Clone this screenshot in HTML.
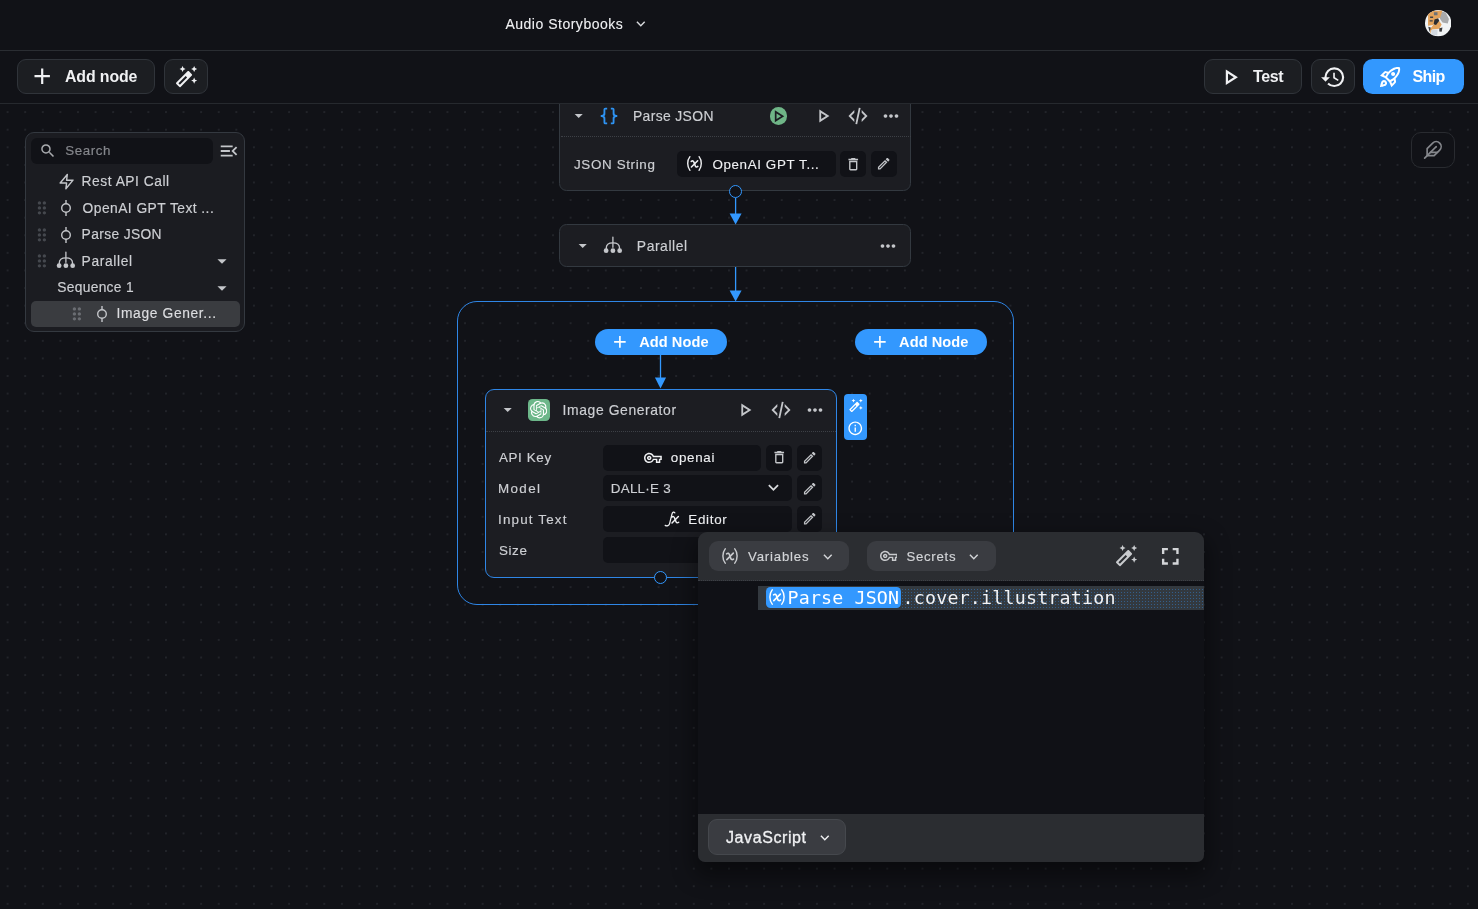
<!DOCTYPE html>
<html lang="en"><head><meta charset="utf-8"><title>Audio Storybooks</title><style>
*{margin:0;padding:0}
html,body{width:1478px;height:909px;overflow:hidden;background:#111217;}
body{position:relative;font-family:'Liberation Sans', sans-serif;}
#app{position:absolute;left:0;top:0;width:1478px;height:909px;will-change:transform;}
.b{position:absolute;box-sizing:border-box}
.ic{position:absolute;display:block}
.t{position:absolute;white-space:nowrap;line-height:20px;}
#canvas{background-image:radial-gradient(circle,#25272d 0.600px,rgba(37,39,45,0) 1.250px);background-size:17.600px 17.600px;background-position:-1.200px 0.300px;}
</style></head>
<body>
<div id="app">
<div class="b" id="canvas" style="left:0;top:103px;width:1478px;height:806px;"></div>
<div class="b " style="left:559.4px;top:90px;width:352.0px;height:101.19999999999999px;background:#1c1d22;border:1px solid #333940;border-radius:7.5px;"></div>
<div class="b " style="left:561px;top:136px;width:349.5px;height:1px;border-top:1px dotted #3d4046;"></div>
<svg class="ic" style="left:569.3px;top:106.0px;width:19.4px;height:19.4px;color:#c4c6ca;" viewBox="0 0 24 24" fill="currentColor"><path d="M7 10l5 5 5-5z"/></svg>
<svg class="ic" style="left:598.1px;top:104.9px;width:22px;height:22px;color:#2e93f3;" viewBox="0 0 24 24" fill="currentColor"><path d="M8 3a2 2 0 0 0-2 2v4a2 2 0 0 1-2 2H3v2h1a2 2 0 0 1 2 2v4a2 2 0 0 0 2 2h2v-2H8v-5a2 2 0 0 0-2-2 2 2 0 0 0 2-2V5h2V3m6 0a2 2 0 0 1 2 2v4a2 2 0 0 0 2 2h1v2h-1a2 2 0 0 0-2 2v4a2 2 0 0 1-2 2h-2v-2h2v-5a2 2 0 0 1 2-2 2 2 0 0 1-2-2V5h-2V3h2z"/></svg>
<span class="t" style="left:633.00px;top:106.00px;font-size:13.9px;letter-spacing:0.360px;color:#cdcfd3;-webkit-text-stroke:0.16px #cdcfd3;">Parse JSON</span>
<div class="b" style="left:769.600px;top:107.100px;width:17.800px;height:17.800px;border-radius:50%;background:#6fb587;"></div>
<svg class="ic" style="left:767.9px;top:105.8px;width:20.5px;height:20.5px;color:#1c1d22;" viewBox="0 0 24 24" fill="currentColor"><path d="M10 8.64L15.27 12 10 15.36V8.64M8 5v14l11-7L8 5z"/></svg>
<svg class="ic" style="left:812.0px;top:105.1px;width:22px;height:22px;color:#c4c6ca;" viewBox="0 0 24 24" fill="currentColor"><path d="M10 8.64L15.27 12 10 15.36V8.64M8 5v14l11-7L8 5z"/></svg>
<svg class="ic" style="left:846.9px;top:105.0px;width:22px;height:22px;color:#c4c6ca;" viewBox="0 0 24 24" fill="currentColor"><path d="M12.89 3l1.96.4L11.11 21l-1.96-.4L12.89 3m6.7 9L16 8.41V5.58L22.42 12 16 18.41v-2.83L19.59 12M1.58 12L8 5.58v2.83L4.41 12 8 15.58v2.83L1.58 12z"/></svg>
<svg class="ic" style="left:879.9px;top:105.0px;width:22px;height:22px;color:#c4c6ca;" viewBox="0 0 24 24" fill="currentColor"><path d="M6 10c-1.1 0-2 .9-2 2s.9 2 2 2 2-.9 2-2-.9-2-2-2zm12 0c-1.1 0-2 .9-2 2s.9 2 2 2 2-.9 2-2-.9-2-2-2zm-6 0c-1.1 0-2 .9-2 2s.9 2 2 2 2-.9 2-2-.9-2-2-2z"/></svg>
<span class="t" style="left:574.00px;top:154.50px;font-size:13.4px;letter-spacing:0.643px;color:#cdcfd3;-webkit-text-stroke:0.16px #cdcfd3;">JSON String</span>
<div class="b " style="left:677.4px;top:150.8px;width:158.39999999999998px;height:26.0px;background:#111217;border-radius:5px;"></div>
<svg class="ic" style="left:684.2px;top:153.3px;width:21px;height:21px;color:#f0f1f3;" viewBox="0 0 24 24" fill="currentColor"><g fill="none" stroke="currentColor" stroke-width="1.600" stroke-linecap="round"><path d="M6.800 4.200C3.400 8.400 3.400 15.600 6.800 19.800"/><path d="M17.200 4.200C20.600 8.400 20.600 15.600 17.200 19.800"/><path d="M8.300 9.600C9.800 8.400 10.800 9 11.400 10.700L12.700 14.300C13.300 16 14.400 16.500 15.800 15.300" stroke-width="1.800"/><path d="M15.600 8.900L8.500 16" stroke-width="1.800"/></g></svg>
<span class="t" style="left:712.40px;top:154.50px;font-size:13.4px;letter-spacing:0.621px;color:#f0f1f3;-webkit-text-stroke:0.1px #f0f1f3;">OpenAI GPT T...</span>
<div class="b " style="left:840.4px;top:150.8px;width:25.600000000000023px;height:26.0px;background:#111217;border-radius:5px;"></div>
<svg class="ic" style="left:845.0px;top:155.6px;width:16.5px;height:16.5px;color:#c4c6ca;" viewBox="0 0 24 24" fill="currentColor"><path d="M6 19c0 1.1.9 2 2 2h8c1.1 0 2-.9 2-2V7H6v12zM8 9h8v10H8V9zm7.5-5l-1-1h-5l-1 1H5v2h14V4z"/></svg>
<div class="b " style="left:871px;top:150.8px;width:26.200000000000045px;height:26.0px;background:#111217;border-radius:5px;"></div>
<svg class="ic" style="left:876.4px;top:156.1px;width:15.4px;height:15.4px;color:#c4c6ca;" viewBox="0 0 24 24" fill="currentColor"><path d="M14.06 9.02l.92.92L5.92 19H5v-.92l9.06-9.06M17.66 3c-.25 0-.51.1-.7.29l-1.83 1.83 3.75 3.75 1.83-1.83a.996.996 0 0 0 0-1.41l-2.34-2.34c-.2-.2-.45-.29-.71-.29zm-3.6 3.19L3 17.25V21h3.75L17.81 9.94l-3.75-3.75z"/></svg>
<div class="b " style="left:559.4px;top:224.4px;width:352.0px;height:42.79999999999998px;background:#1c1d22;border:1px solid #333940;border-radius:7.5px;"></div>
<svg class="ic" style="left:572.6px;top:235.9px;width:19.4px;height:19.4px;color:#c4c6ca;" viewBox="0 0 24 24" fill="currentColor"><path d="M7 10l5 5 5-5z"/></svg>
<svg class="ic" style="left:603.0px;top:234.7px;width:19.8px;height:19.8px;color:#c4c6ca;" viewBox="0 0 24 24" fill="currentColor"><g fill="none" stroke="currentColor" stroke-width="1.600" stroke-linecap="round"><path d="M12 2.500V15"/><path d="M4 17V15.500C4 11.500 7.500 9.500 12 9.500S20 11.500 20 15.500V17"/></g><circle cx="3.800" cy="19" r="2.900"/><circle cx="12" cy="19" r="2.900"/><circle cx="20.200" cy="19" r="2.900"/></svg>
<span class="t" style="left:636.80px;top:236.00px;font-size:13.9px;letter-spacing:0.566px;color:#cdcfd3;-webkit-text-stroke:0.16px #cdcfd3;">Parallel</span>
<svg class="ic" style="left:877.3px;top:235.0px;width:22px;height:22px;color:#c4c6ca;" viewBox="0 0 24 24" fill="currentColor"><path d="M6 10c-1.1 0-2 .9-2 2s.9 2 2 2 2-.9 2-2-.9-2-2-2zm12 0c-1.1 0-2 .9-2 2s.9 2 2 2 2-.9 2-2-.9-2-2-2zm-6 0c-1.1 0-2 .9-2 2s.9 2 2 2 2-.9 2-2-.9-2-2-2z"/></svg>
<div class="b " style="left:457.2px;top:300.9px;width:556.8px;height:304.1px;border:1.3px solid #2f86e6;border-radius:20px;"></div>
<div class="b " style="left:594.8px;top:329px;width:132.0px;height:26px;background:#3398fe;border-radius:13px;"></div>
<svg class="ic" style="left:610.3px;top:332.1px;width:19.8px;height:19.8px;color:#fff;" viewBox="0 0 24 24" fill="currentColor"><path d="M19 13h-6v6h-2v-6H5v-2h6V5h2v6h6v2z"/></svg>
<span class="t" style="left:639.20px;top:332.00px;font-size:14.6px;letter-spacing:0.058px;color:#fff;font-weight:700;">Add Node</span>
<div class="b " style="left:854.7px;top:329px;width:132.0px;height:26px;background:#3398fe;border-radius:13px;"></div>
<svg class="ic" style="left:870.2px;top:332.1px;width:19.8px;height:19.8px;color:#fff;" viewBox="0 0 24 24" fill="currentColor"><path d="M19 13h-6v6h-2v-6H5v-2h6V5h2v6h6v2z"/></svg>
<span class="t" style="left:899.10px;top:332.00px;font-size:14.6px;letter-spacing:0.058px;color:#fff;font-weight:700;">Add Node</span>
<svg class="b" style="left:0;top:0;width:1478px;height:909px;overflow:visible" viewBox="0 0 1478 909">
<g stroke="#3398fe" stroke-width="1.3" fill="none">
<path d="M735.6 198V215"/><path d="M735.6 267V292"/><path d="M660.5 355V379"/>
</g>
<g fill="#3398fe"><path d="M729.6 213.400h12l-6 11z"/><path d="M729.6 290.400h12l-6 11z"/><path d="M654.9 377.400h11.200l-5.600 11z"/></g>
</svg>
<div class="b " style="left:485px;top:388.5px;width:352.20000000000005px;height:189.10000000000002px;background:#1c1d22;border:1.2px solid #2f86e6;border-radius:9px;"></div>
<div class="b " style="left:486px;top:430.5px;width:350px;height:1.0px;border-top:1px dotted #3d4046;"></div>
<svg class="ic" style="left:497.5px;top:400.3px;width:19.4px;height:19.4px;color:#c4c6ca;" viewBox="0 0 24 24" fill="currentColor"><path d="M7 10l5 5 5-5z"/></svg>
<div class="b" style="left:527.600px;top:398.900px;width:22.100px;height:22.100px;border-radius:4.500px;background:#6db78a;"></div>
<svg class="ic" style="left:530px;top:401.300px;width:17.400px;height:17.400px" viewBox="0 0 24 24" fill="#fff"><path d="M22.2819 9.8211a5.9847 5.9847 0 0 0-.5157-4.9108 6.0462 6.0462 0 0 0-6.5098-2.9A6.0651 6.0651 0 0 0 4.9807 4.1818a5.9847 5.9847 0 0 0-3.9977 2.9 6.0462 6.0462 0 0 0 .7427 7.0966 5.98 5.98 0 0 0 .511 4.9107 6.051 6.051 0 0 0 6.5146 2.9001A5.9847 5.9847 0 0 0 13.2599 24a6.0557 6.0557 0 0 0 5.7718-4.2058 5.9894 5.9894 0 0 0 3.9977-2.9001 6.0557 6.0557 0 0 0-.7475-7.0729zm-9.022 12.6081a4.4755 4.4755 0 0 1-2.8764-1.0408l.1419-.0804 4.7783-2.7582a.7948.7948 0 0 0 .3927-.6813v-6.7369l2.02 1.1686a.071.071 0 0 1 .038.052v5.5826a4.504 4.504 0 0 1-4.4945 4.4944zm-9.6607-4.1254a4.4708 4.4708 0 0 1-.5346-3.0137l.142.0852 4.783 2.7582a.7712.7712 0 0 0 .7806 0l5.8428-3.3685v2.3324a.0804.0804 0 0 1-.0332.0615L9.74 19.9502a4.4992 4.4992 0 0 1-6.1408-1.6464zM2.3408 7.8956a4.485 4.485 0 0 1 2.3655-1.9728V11.6a.7664.7664 0 0 0 .3879.6765l5.8144 3.3543-2.0201 1.1685a.0757.0757 0 0 1-.071 0l-4.8303-2.7865A4.504 4.504 0 0 1 2.3408 7.872zm16.5963 3.8558L13.1038 8.364 15.1192 7.2a.0757.0757 0 0 1 .071 0l4.8303 2.7913a4.4944 4.4944 0 0 1-.6765 8.1042v-5.6772a.79.79 0 0 0-.407-.667zm2.0107-3.0231l-.142-.0852-4.7735-2.7818a.7759.7759 0 0 0-.7854 0L9.409 9.2297V6.8974a.0662.0662 0 0 1 .0284-.0615l4.8303-2.7866a4.4992 4.4992 0 0 1 6.6802 4.66zM8.3065 12.863l-2.02-1.1638a.0804.0804 0 0 1-.038-.0567V6.0742a4.4992 4.4992 0 0 1 7.3757-3.4537l-.142.0805L8.704 5.459a.7948.7948 0 0 0-.3927.6813zm1.0976-2.3654l2.602-1.4998 2.6069 1.4998v2.9994l-2.5974 1.4997-2.6067-1.4997Z"/></svg>
<span class="t" style="left:562.60px;top:400.00px;font-size:13.9px;letter-spacing:0.601px;color:#cdcfd3;-webkit-text-stroke:0.16px #cdcfd3;">Image Generator</span>
<svg class="ic" style="left:734.3px;top:399.0px;width:22px;height:22px;color:#c4c6ca;" viewBox="0 0 24 24" fill="currentColor"><path d="M10 8.64L15.27 12 10 15.36V8.64M8 5v14l11-7L8 5z"/></svg>
<svg class="ic" style="left:770.0px;top:398.9px;width:22px;height:22px;color:#c4c6ca;" viewBox="0 0 24 24" fill="currentColor"><path d="M12.89 3l1.96.4L11.11 21l-1.96-.4L12.89 3m6.7 9L16 8.41V5.58L22.42 12 16 18.41v-2.83L19.59 12M1.58 12L8 5.58v2.83L4.41 12 8 15.58v2.83L1.58 12z"/></svg>
<svg class="ic" style="left:803.7px;top:399.0px;width:22px;height:22px;color:#c4c6ca;" viewBox="0 0 24 24" fill="currentColor"><path d="M6 10c-1.1 0-2 .9-2 2s.9 2 2 2 2-.9 2-2-.9-2-2-2zm12 0c-1.1 0-2 .9-2 2s.9 2 2 2 2-.9 2-2-.9-2-2-2zm-6 0c-1.1 0-2 .9-2 2s.9 2 2 2 2-.9 2-2-.9-2-2-2z"/></svg>
<span class="t" style="left:499.00px;top:448.00px;font-size:13.4px;letter-spacing:0.620px;color:#cdcfd3;-webkit-text-stroke:0.16px #cdcfd3;">API Key</span>
<span class="t" style="left:498.00px;top:479.00px;font-size:13.4px;letter-spacing:1.376px;color:#cdcfd3;-webkit-text-stroke:0.16px #cdcfd3;">Model</span>
<span class="t" style="left:498.00px;top:510.00px;font-size:13.4px;letter-spacing:1.184px;color:#cdcfd3;-webkit-text-stroke:0.16px #cdcfd3;">Input Text</span>
<span class="t" style="left:499.00px;top:541.00px;font-size:13.4px;letter-spacing:0.599px;color:#cdcfd3;-webkit-text-stroke:0.16px #cdcfd3;">Size</span>
<div class="b " style="left:602.5px;top:444.5px;width:158.39999999999998px;height:26.100000000000023px;background:#111217;border-radius:5px;"></div>
<svg class="ic" style="left:644.1px;top:448.7px;width:17.8px;height:17.8px;color:#f0f1f3;" viewBox="0 0 24 24" fill="currentColor"><path d="M22 19h-6v-4h-2.68c-1.14 2.42-3.6 4-6.32 4-3.86 0-7-3.14-7-7s3.14-7 7-7c2.72 0 5.17 1.58 6.32 4H24v6h-2v4zm-4-2h2v-4h2v-2H11.94l-.23-.67C11.01 8.34 9.11 7 7 7c-2.76 0-5 2.24-5 5s2.24 5 5 5c2.11 0 4.01-1.34 4.71-3.33l.23-.67H18v4zM7 15c-1.65 0-3-1.35-3-3s1.35-3 3-3 3 1.35 3 3-1.35 3-3 3zm0-4c-.55 0-1 .45-1 1s.45 1 1 1 1-.45 1-1-.45-1-1-1z"/></svg>
<span class="t" style="left:670.80px;top:447.90px;font-size:13.4px;letter-spacing:0.673px;color:#f0f1f3;-webkit-text-stroke:0.1px #f0f1f3;">openai</span>
<div class="b " style="left:765.7px;top:444.5px;width:26.09999999999991px;height:26.100000000000023px;background:#111217;border-radius:5px;"></div>
<svg class="ic" style="left:770.8px;top:449.1px;width:16.5px;height:16.5px;color:#c4c6ca;" viewBox="0 0 24 24" fill="currentColor"><path d="M6 19c0 1.1.9 2 2 2h8c1.1 0 2-.9 2-2V7H6v12zM8 9h8v10H8V9zm7.5-5l-1-1h-5l-1 1H5v2h14V4z"/></svg>
<div class="b " style="left:796.8px;top:444.5px;width:25.5px;height:26.100000000000023px;background:#111217;border-radius:5px;"></div>
<svg class="ic" style="left:801.9px;top:449.8px;width:15.4px;height:15.4px;color:#c4c6ca;" viewBox="0 0 24 24" fill="currentColor"><path d="M14.06 9.02l.92.92L5.92 19H5v-.92l9.06-9.06M17.66 3c-.25 0-.51.1-.7.29l-1.83 1.83 3.75 3.75 1.83-1.83a.996.996 0 0 0 0-1.41l-2.34-2.34c-.2-.2-.45-.29-.71-.29zm-3.6 3.19L3 17.25V21h3.75L17.81 9.94l-3.75-3.75z"/></svg>
<div class="b " style="left:602.5px;top:475.25px;width:189.29999999999995px;height:26.100000000000023px;background:#111217;border-radius:5px;"></div>
<span class="t" style="left:610.80px;top:478.70px;font-size:13.4px;letter-spacing:0.256px;color:#cdcfd3;-webkit-text-stroke:0.16px #cdcfd3;">DALL·E 3</span>
<svg class="ic" style="left:762.6px;top:477.4px;width:20.9px;height:20.9px;color:#d8dadd;" viewBox="0 0 24 24" fill="currentColor"><path d="M16.59 8.59L12 13.17 7.41 8.59 6 10l6 6 6-6z"/></svg>
<div class="b " style="left:796.8px;top:475.25px;width:25.5px;height:26.100000000000023px;background:#111217;border-radius:5px;"></div>
<svg class="ic" style="left:801.9px;top:480.6px;width:15.4px;height:15.4px;color:#c4c6ca;" viewBox="0 0 24 24" fill="currentColor"><path d="M14.06 9.02l.92.92L5.92 19H5v-.92l9.06-9.06M17.66 3c-.25 0-.51.1-.7.29l-1.83 1.83 3.75 3.75 1.83-1.83a.996.996 0 0 0 0-1.41l-2.34-2.34c-.2-.2-.45-.29-.71-.29zm-3.6 3.19L3 17.25V21h3.75L17.81 9.94l-3.75-3.75z"/></svg>
<div class="b " style="left:602.5px;top:506.0px;width:189.29999999999995px;height:26.100000000000023px;background:#111217;border-radius:5px;"></div>
<svg class="ic" style="left:663.2px;top:510.1px;width:17.6px;height:17.6px;color:#f0f1f3;" viewBox="0 0 24 24" fill="currentColor"><g fill="none" stroke="currentColor" stroke-width="1.700" stroke-linecap="round" stroke-linejoin="round"><path d="M16.200 3.800C15 2.400 13 2.600 12.300 5.400L9 18.600C8.300 21.400 5.500 22.300 3 21"/><path d="M12 9.700C13.800 8.300 15 9 15.800 11L17.600 15.600C18.400 17.600 19.800 18.200 21.400 16.800" stroke-width="2"/><path d="M21 8.800L12.300 17.800" stroke-width="2"/></g></svg>
<span class="t" style="left:688.30px;top:509.70px;font-size:13.4px;letter-spacing:0.696px;color:#f0f1f3;-webkit-text-stroke:0.1px #f0f1f3;">Editor</span>
<div class="b " style="left:796.8px;top:506.0px;width:25.5px;height:26.100000000000023px;background:#111217;border-radius:5px;"></div>
<svg class="ic" style="left:801.9px;top:511.3px;width:15.4px;height:15.4px;color:#c4c6ca;" viewBox="0 0 24 24" fill="currentColor"><path d="M14.06 9.02l.92.92L5.92 19H5v-.92l9.06-9.06M17.66 3c-.25 0-.51.1-.7.29l-1.83 1.83 3.75 3.75 1.83-1.83a.996.996 0 0 0 0-1.41l-2.34-2.34c-.2-.2-.45-.29-.71-.29zm-3.6 3.19L3 17.25V21h3.75L17.81 9.94l-3.75-3.75z"/></svg>
<div class="b " style="left:602.5px;top:536.75px;width:189.29999999999995px;height:26.100000000000023px;background:#111217;border-radius:5px;"></div>
<div class="b " style="left:844.2px;top:394px;width:22.399999999999977px;height:45.80000000000001px;background:#3398fe;border-radius:4px;"></div>
<svg class="ic" style="left:847.7px;top:398.3px;width:15.4px;height:15.4px;color:#fff;" viewBox="0 0 24 24" fill="currentColor"><path d="M20 7l.94-2.060L23 4l-2.060-.94L20 1l-.94 2.060L17 4l2.060.94zM8.500 7l.94-2.060L11.500 4l-2.060-.94L8.500 1l-.94 2.060L5.500 4l2.060.94zM20 12.500l-.94 2.060-2.060.94 2.060.94.94 2.060.94-2.060L23 15.500l-2.060-.94zM17.710 9.120l-2.830-2.830c-.2-.19-.45-.29-.71-.29-.26 0-.51.1-.71.29L2.290 17.460a.996.996 0 0 0 0 1.410l2.830 2.830c.2.200.45.300.71.300s.51-.1.71-.29l11.170-11.170c.39-.39.39-1.030 0-1.420zM5.830 19.590l-1.410-1.410L11.590 11 13 12.410l-7.170 7.180z"/></svg>
<svg class="ic" style="left:847.1px;top:419.8px;width:16.5px;height:16.5px;color:#fff;" viewBox="0 0 24 24" fill="currentColor"><path d="M11 7h2v2h-2zm0 4h2v6h-2zm1-9C6.48 2 2 6.48 2 12s4.48 10 10 10 10-4.48 10-10S17.52 2 12 2zm0 18c-4.41 0-8-3.59-8-8s3.59-8 8-8 8 3.59 8 8-3.59 8-8 8z"/></svg>
<div class="b" style="left:729px;top:184.600px;width:13.400px;height:13.400px;border-radius:50%;background:#111217;border:1.3px solid #3398fe;box-sizing:border-box"></div>
<div class="b" style="left:653.9px;top:570.700px;width:13.400px;height:13.400px;border-radius:50%;background:#111217;border:1.3px solid #3398fe;box-sizing:border-box"></div>
<div class="b" style="left:697.800px;top:532.400px;width:506px;height:329.600px;border-radius:9px 9px 7px 7px;box-shadow:0 10px 22px 4px rgba(0,0,0,.42);"></div>
<div class="b " style="left:697.8px;top:532.4px;width:506.0px;height:48.60000000000002px;background:#2b2d31;border-radius:9px 9px 0 0;"></div>
<div class="b " style="left:697.8px;top:580px;width:506.0px;height:1px;border-top:1px dotted #3c3f45;"></div>
<div class="b " style="left:697.8px;top:581px;width:506.0px;height:233px;background:#101116;"></div>
<div class="b " style="left:697.8px;top:813.6px;width:506.0px;height:48.39999999999998px;background:#2b2d31;border-radius:0 0 7px 7px;"></div>
<div class="b " style="left:708.6px;top:541px;width:140.39999999999998px;height:30px;background:#3a3c41;border-radius:9px;"></div>
<svg class="ic" style="left:719.0px;top:545.0px;width:22px;height:22px;color:#c9cbce;" viewBox="0 0 24 24" fill="currentColor"><g fill="none" stroke="currentColor" stroke-width="1.600" stroke-linecap="round"><path d="M6.800 4.200C3.400 8.400 3.400 15.600 6.800 19.800"/><path d="M17.200 4.200C20.600 8.400 20.600 15.600 17.200 19.800"/><path d="M8.300 9.600C9.800 8.400 10.800 9 11.400 10.700L12.700 14.300C13.300 16 14.400 16.500 15.800 15.300" stroke-width="1.800"/><path d="M15.600 8.900L8.500 16" stroke-width="1.800"/></g></svg>
<span class="t" style="left:748.00px;top:546.90px;font-size:13.2px;letter-spacing:0.824px;color:#d3d5d8;-webkit-text-stroke:0.16px #d3d5d8;">Variables</span>
<svg class="ic" style="left:818.5px;top:547.6px;width:17.6px;height:17.6px;color:#d3d5d8;" viewBox="0 0 24 24" fill="currentColor"><path d="M16.59 8.59L12 13.17 7.41 8.59 6 10l6 6 6-6z"/></svg>
<div class="b " style="left:867px;top:541px;width:129px;height:30px;background:#3a3c41;border-radius:9px;"></div>
<svg class="ic" style="left:879.6px;top:547.3px;width:17.8px;height:17.8px;color:#c9cbce;" viewBox="0 0 24 24" fill="currentColor"><path d="M22 19h-6v-4h-2.68c-1.14 2.42-3.6 4-6.32 4-3.86 0-7-3.14-7-7s3.14-7 7-7c2.72 0 5.17 1.58 6.32 4H24v6h-2v4zm-4-2h2v-4h2v-2H11.94l-.23-.67C11.01 8.34 9.11 7 7 7c-2.76 0-5 2.24-5 5s2.24 5 5 5c2.11 0 4.01-1.34 4.71-3.33l.23-.67H18v4zM7 15c-1.65 0-3-1.35-3-3s1.35-3 3-3 3 1.35 3 3-1.35 3-3 3zm0-4c-.55 0-1 .45-1 1s.45 1 1 1 1-.45 1-1-.45-1-1-1z"/></svg>
<span class="t" style="left:906.40px;top:546.90px;font-size:13.2px;letter-spacing:0.748px;color:#d3d5d8;-webkit-text-stroke:0.16px #d3d5d8;">Secrets</span>
<svg class="ic" style="left:964.9px;top:547.6px;width:17.6px;height:17.6px;color:#d3d5d8;" viewBox="0 0 24 24" fill="currentColor"><path d="M16.59 8.59L12 13.17 7.41 8.59 6 10l6 6 6-6z"/></svg>
<svg class="ic" style="left:1114.3px;top:544.1px;width:24.2px;height:24.2px;color:#c9cbce;" viewBox="0 0 24 24" fill="currentColor"><path d="M20 7l.94-2.060L23 4l-2.060-.94L20 1l-.94 2.060L17 4l2.060.94zM8.500 7l.94-2.060L11.500 4l-2.060-.94L8.500 1l-.94 2.060L5.500 4l2.060.94zM20 12.500l-.94 2.060-2.060.94 2.060.94.94 2.060.94-2.060L23 15.500l-2.060-.94zM17.710 9.120l-2.830-2.830c-.2-.19-.45-.29-.71-.29-.26 0-.51.1-.71.29L2.290 17.460a.996.996 0 0 0 0 1.410l2.830 2.830c.2.200.45.300.71.300s.51-.1.71-.29l11.170-11.170c.39-.39.39-1.030 0-1.420zM5.830 19.590l-1.410-1.410L11.590 11 13 12.410l-7.170 7.180z"/></svg>
<svg class="ic" style="left:1155.7px;top:541.9px;width:28.6px;height:28.6px;color:#d3d5d8;" viewBox="0 0 24 24" fill="currentColor"><path d="M7 14H5v5h5v-2H7v-3zm-2-4h2V7h3V5H5v5zm12 7h-3v2h5v-5h-2v3zM14 5v2h3v3h2V5h-5z"/></svg>
<div class="b " style="left:757.6px;top:585.6px;width:446.19999999999993px;height:24.199999999999932px;background:#33393f;"></div>
<div class="b " style="left:901px;top:588px;width:302.79999999999995px;height:21.799999999999955px;background-image:radial-gradient(circle,rgba(51,140,230,.45) 0.450px,rgba(51,140,230,0) 0.800px);background-size:3px 3px;"></div>
<div class="b " style="left:766px;top:587.3px;width:135px;height:20.300000000000068px;background:#3398fe;border-radius:4.5px;"></div>
<svg class="ic" style="left:766.2px;top:586.4px;width:22px;height:22px;color:#fff;" viewBox="0 0 24 24" fill="currentColor"><g fill="none" stroke="currentColor" stroke-width="1.600" stroke-linecap="round"><path d="M6.800 4.200C3.400 8.400 3.400 15.600 6.800 19.800"/><path d="M17.200 4.200C20.600 8.400 20.600 15.600 17.200 19.800"/><path d="M8.300 9.600C9.800 8.400 10.800 9 11.400 10.700L12.700 14.300C13.300 16 14.400 16.500 15.800 15.300" stroke-width="1.800"/><path d="M15.600 8.900L8.500 16" stroke-width="1.800"/></g></svg>
<span class="t" style="left:787.60px;top:587.90px;font-size:18.3px;letter-spacing:0.149px;color:#fff;font-family:'DejaVu Sans Mono', 'Liberation Mono', monospace;">Parse JSON</span>
<span class="t" style="left:902.60px;top:587.90px;font-size:18.3px;letter-spacing:0.205px;color:#f2f3f5;font-family:'DejaVu Sans Mono', 'Liberation Mono', monospace;">.cover.illustration</span>
<div class="b " style="left:708.4px;top:819px;width:137.60000000000002px;height:35.60000000000002px;background:#3a3c41;border:1px solid #45484d;border-radius:9px;box-sizing:border-box;"></div>
<span class="t" style="left:726.00px;top:827.50px;font-size:16px;letter-spacing:0.594px;color:#f0f1f3;-webkit-text-stroke:0.3px #f0f1f3;">JavaScript</span>
<svg class="ic" style="left:815.7px;top:828.5px;width:17.6px;height:17.6px;color:#f0f1f3;" viewBox="0 0 24 24" fill="currentColor"><path d="M16.59 8.59L12 13.17 7.41 8.59 6 10l6 6 6-6z"/></svg>
<div class="b " style="left:0px;top:0px;width:1478px;height:50px;background:#111217;"></div>
<div class="b " style="left:0px;top:50px;width:1478px;height:1px;background:#2a2d32;"></div>
<div class="b " style="left:0px;top:51px;width:1478px;height:51.599999999999994px;background:#111217;"></div>
<div class="b " style="left:0px;top:102.6px;width:1478px;height:1.0px;background:#26292e;"></div>
<span class="t" style="left:505.40px;top:14.00px;font-size:14px;letter-spacing:0.511px;color:#f0f1f3;-webkit-text-stroke:0.1px #f0f1f3;">Audio Storybooks</span>
<svg class="ic" style="left:632.1px;top:15.3px;width:17.6px;height:17.6px;color:#d8dadd;" viewBox="0 0 24 24" fill="currentColor"><path d="M16.59 8.59L12 13.17 7.41 8.59 6 10l6 6 6-6z"/></svg>
<svg class="ic" style="left:1424.800px;top:10.400px;width:26.400px;height:26.400px" viewBox="0 0 26 26">
<defs><clipPath id="avc"><circle cx="13" cy="13" r="13"/></clipPath></defs>
<g clip-path="url(#avc)"><rect width="26" height="26" fill="#f1f3f5"/>
<path d="M15.200 1.300L20.400 2.500 23.600 8.900 22.400 13.200 17.200 12.400 14.100 7.700z" fill="#a9aaac"/>
<path d="M3 3.700L7.700 1 17.200 .6 14.900 7.700 10.900 8.900 8.100 14.800 3 15.600z" fill="#e3a35c"/>
<path d="M8.100 14.800L14.100 10.900 16.400 14.400 14.100 18.400 6.900 19.200 5.300 23.500 4.900 18.800z" fill="#e3a35c"/>
<path d="M9.300 9.300L12.900 8.100 14.100 10.500 10.900 14.800 8.500 14z" fill="#2b2d31"/>
<path d="M14.100 18L17.200 17.200 16.400 21.500 14.100 21.100z" fill="#3a3b3e"/>
<path d="M3.200 16.400L5.700 17.200 4.600 21.900z" fill="#3a3b3e"/>
<path d="M6.100 19.600L12.500 19.200 12.100 25 6.500 24.300z" fill="#d3d9e0"/>
<path d="M8.800 2.200h3.500v3H8.800z" fill="#6d7278"/><path d="M5 6.500h3v1.300H5zM4.600 10.200h3v1.200h-3z" fill="#3f4247"/>
</g></svg>
<div class="b " style="left:16.5px;top:58.9px;width:138.5px;height:35.6px;background:#1c1e22;border:1px solid #30343a;border-radius:9px;box-sizing:border-box;"></div>
<svg class="ic" style="left:29.4px;top:63.2px;width:26.4px;height:26.4px;color:#f0f1f3;" viewBox="0 0 24 24" fill="currentColor"><path d="M19 13h-6v6h-2v-6H5v-2h6V5h2v6h6v2z"/></svg>
<span class="t" style="left:65.00px;top:66.70px;font-size:15.9px;letter-spacing:-0.118px;color:#f0f1f3;font-weight:700;">Add node</span>
<div class="b " style="left:164.3px;top:58.9px;width:43.89999999999998px;height:35.6px;background:#1c1e22;border:1px solid #30343a;border-radius:9px;box-sizing:border-box;"></div>
<svg class="ic" style="left:174.2px;top:64.7px;width:24.2px;height:24.2px;color:#f0f1f3;" viewBox="0 0 24 24" fill="currentColor"><path d="M20 7l.94-2.060L23 4l-2.060-.94L20 1l-.94 2.060L17 4l2.060.94zM8.500 7l.94-2.060L11.500 4l-2.060-.94L8.500 1l-.94 2.060L5.500 4l2.060.94zM20 12.500l-.94 2.060-2.060.94 2.060.94.94 2.060.94-2.060L23 15.500l-2.060-.94zM17.710 9.120l-2.830-2.830c-.2-.19-.45-.29-.71-.29-.26 0-.51.1-.71.29L2.290 17.460a.996.996 0 0 0 0 1.410l2.830 2.830c.2.200.45.300.71.300s.51-.1.71-.29l11.170-11.170c.39-.39.39-1.030 0-1.420zM5.830 19.590l-1.410-1.410L11.590 11 13 12.410l-7.170 7.180z"/></svg>
<div class="b " style="left:1203.7px;top:58.9px;width:98.0px;height:35.6px;background:#1c1e22;border:1px solid #30343a;border-radius:9px;box-sizing:border-box;"></div>
<svg class="ic" style="left:1216.7px;top:63.5px;width:26.4px;height:26.4px;color:#f0f1f3;" viewBox="0 0 24 24" fill="currentColor"><path d="M10 8.64L15.27 12 10 15.36V8.64M8 5v14l11-7L8 5z"/></svg>
<span class="t" style="left:1253.00px;top:66.90px;font-size:16px;letter-spacing:-0.394px;color:#f0f1f3;font-weight:700;">Test</span>
<div class="b " style="left:1311px;top:58.9px;width:43.90000000000009px;height:35.6px;background:#1c1e22;border:1px solid #30343a;border-radius:9px;box-sizing:border-box;"></div>
<svg class="ic" style="left:1320.0px;top:63.5px;width:26.4px;height:26.4px;color:#f0f1f3;" viewBox="0 0 24 24" fill="currentColor"><path d="M13 3a9 9 0 0 0-9 9H1l3.89 3.89.07.14L9 12H6c0-3.87 3.13-7 7-7s7 3.13 7 7-3.13 7-7 7c-1.93 0-3.68-.79-4.94-2.06l-1.42 1.42A8.954 8.954 0 0 0 13 21a9 9 0 0 0 0-18zm-1 5v5l4.25 2.52.77-1.28-3.52-2.09V8H12z"/></svg>
<div class="b " style="left:1363.3px;top:58.9px;width:100.70000000000005px;height:35.6px;background:#3398fe;border-radius:9.5px;"></div>
<svg class="ic" style="left:1377.7px;top:64.6px;width:24.2px;height:24.2px;color:#fff;" viewBox="0 0 24 24" fill="currentColor"><path d="M6 15c-.83 0-1.58.34-2.12.88C2.700 17.06 2 22 2 22s4.940-.7 6.120-1.880A2.996 2.996 0 0 0 6 15zm.71 3.710c-.28.28-2.170.76-2.170.76s.47-1.880.76-2.170c.17-.19.42-.3.7-.3a1.003 1.003 0 0 1 .71 1.710zm10.710-5.060c6.360-6.360 4.240-11.310 4.240-11.310S16.710.22 10.350 6.580l-2.490-.5a2.030 2.030 0 0 0-1.810.55L2 10.690l5 2.140L11.170 17l2.140 5 4.050-4.050c.47-.47.68-1.150.55-1.810l-.49-2.490zM7.410 10.830l-1.910-.82 1.970-1.970 1.440.29c-.57.83-1.080 1.700-1.500 2.500zm6.580 7.670l-.82-1.910c.8-.42 1.670-.93 2.490-1.500l.29 1.440-1.960 1.970zM16 12.240c-1.320 1.320-3.380 2.400-4.040 2.730l-2.930-2.930c.32-.65 1.400-2.710 2.730-4.040 4.680-4.680 8.230-3.990 8.230-3.990s.69 3.550-3.990 8.230zM15 11c1.100 0 2-.9 2-2s-.9-2-2-2-2 .9-2 2 .9 2 2 2z"/></svg>
<span class="t" style="left:1412.50px;top:66.90px;font-size:16px;letter-spacing:-0.597px;color:#fff;font-weight:700;">Ship</span>
<div class="b " style="left:1410.5px;top:132px;width:44.0px;height:35.599999999999994px;background:#111217;border:1px solid #292b30;border-radius:10px;box-sizing:border-box;"></div>
<svg class="ic" style="left:1422.5px;top:139.9px;width:19.8px;height:19.8px;color:#85878c;" viewBox="0 0 24 24" fill="currentColor"><g fill="none" stroke="currentColor" stroke-width="2" stroke-linecap="round" stroke-linejoin="round"><path d="M20.24 12.240a6 6 0 0 0-8.490-8.490L5 10.500V19h8.500z"/><line x1="16" y1="8" x2="2" y2="22"/><line x1="17.500" y1="15" x2="9" y2="15"/></g></svg>
<div class="b " style="left:25.2px;top:132px;width:219.60000000000002px;height:200px;background:#1b1c21;border:1px solid #343940;border-radius:9px;box-sizing:border-box;"></div>
<div class="b " style="left:30.6px;top:137.8px;width:182.3px;height:26.099999999999994px;background:#111217;border-radius:6px;"></div>
<svg class="ic" style="left:38.9px;top:142.1px;width:17.6px;height:17.6px;color:#a8aaae;" viewBox="0 0 24 24" fill="currentColor"><path d="M15.5 14h-.79l-.28-.27A6.471 6.471 0 0 0 16 9.5 6.5 6.5 0 1 0 9.5 16c1.61 0 3.09-.59 4.23-1.57l.27.28v.79l5 4.99L20.49 19l-4.99-5zm-6 0C7.01 14 5 11.99 5 9.5S7.01 5 9.5 5 14 7.01 14 9.5 11.99 14 9.5 14z"/></svg>
<span class="t" style="left:65.20px;top:141.20px;font-size:13.4px;letter-spacing:0.584px;color:#85878c;-webkit-text-stroke:0.16px #85878c;">Search</span>
<svg class="ic" style="left:217.5px;top:139.7px;width:22px;height:22px;color:#c4c6ca;" viewBox="0 0 24 24" fill="currentColor"><path d="M3 18h13v-2H3v2zm0-5h10v-2H3v2zm0-7v2h13V6H3zm18 9.59L17.42 12 21 8.41 19.59 7l-5 5 5 5L21 15.59z"/></svg>
<div class="b " style="left:30.6px;top:300.7px;width:209.20000000000002px;height:25.900000000000034px;background:#3a3c40;border-radius:5px;"></div>
<svg class="ic" style="left:57.7px;top:173.1px;width:17.2px;height:17.2px;color:#c4c6ca;" viewBox="0 0 24 24" fill="currentColor"><polygon points="13 2 3 14 12 14 11 22 21 10 12 10 13 2" fill="none" stroke="currentColor" stroke-width="2" stroke-linejoin="round" stroke-linecap="round"/></svg>
<span class="t" style="left:81.60px;top:172.30px;font-size:13.8px;letter-spacing:0.519px;color:#cdcfd3;-webkit-text-stroke:0.16px #cdcfd3;">Rest API Call</span>
<svg class="ic" style="left:31.9px;top:198.1px;width:19.8px;height:19.8px;color:#45484e;" viewBox="0 0 24 24" fill="currentColor"><path d="M11 18c0 1.1-.9 2-2 2s-2-.9-2-2 .9-2 2-2 2 .9 2 2zm-2-8c-1.1 0-2 .9-2 2s.9 2 2 2 2-.9 2-2-.9-2-2-2zm0-6c-1.1 0-2 .9-2 2s.9 2 2 2 2-.9 2-2-.9-2-2-2zm6 4c1.1 0 2-.9 2-2s-.9-2-2-2-2 .9-2 2 .9 2 2 2zm0 2c-1.1 0-2 .9-2 2s.9 2 2 2 2-.9 2-2-.9-2-2-2zm0 6c-1.1 0-2 .9-2 2s.9 2 2 2 2-.9 2-2-.9-2-2-2z"/></svg>
<svg class="ic" style="left:57.2px;top:199.3px;width:18px;height:18px;color:#c4c6ca" viewBox="0 0 18 18" fill="none" stroke="currentColor" stroke-width="1.400"><circle cx="9" cy="9" r="4.300"/><path d="M9 1v3.700M9 13.300V17"/></svg>
<svg class="ic" style="left:31.9px;top:224.5px;width:19.8px;height:19.8px;color:#45484e;" viewBox="0 0 24 24" fill="currentColor"><path d="M11 18c0 1.1-.9 2-2 2s-2-.9-2-2 .9-2 2-2 2 .9 2 2zm-2-8c-1.1 0-2 .9-2 2s.9 2 2 2 2-.9 2-2-.9-2-2-2zm0-6c-1.1 0-2 .9-2 2s.9 2 2 2 2-.9 2-2-.9-2-2-2zm6 4c1.1 0 2-.9 2-2s-.9-2-2-2-2 .9-2 2 .9 2 2 2zm0 2c-1.1 0-2 .9-2 2s.9 2 2 2 2-.9 2-2-.9-2-2-2zm0 6c-1.1 0-2 .9-2 2s.9 2 2 2 2-.9 2-2-.9-2-2-2z"/></svg>
<svg class="ic" style="left:57.2px;top:225.7px;width:18px;height:18px;color:#c4c6ca" viewBox="0 0 18 18" fill="none" stroke="currentColor" stroke-width="1.400"><circle cx="9" cy="9" r="4.300"/><path d="M9 1v3.700M9 13.300V17"/></svg>
<span class="t" style="left:82.60px;top:198.70px;font-size:13.8px;letter-spacing:0.455px;color:#cdcfd3;-webkit-text-stroke:0.16px #cdcfd3;">OpenAI GPT Text ...</span>
<span class="t" style="left:81.60px;top:225.10px;font-size:13.8px;letter-spacing:0.366px;color:#cdcfd3;-webkit-text-stroke:0.16px #cdcfd3;">Parse JSON</span>
<svg class="ic" style="left:31.9px;top:250.9px;width:19.8px;height:19.8px;color:#45484e;" viewBox="0 0 24 24" fill="currentColor"><path d="M11 18c0 1.1-.9 2-2 2s-2-.9-2-2 .9-2 2-2 2 .9 2 2zm-2-8c-1.1 0-2 .9-2 2s.9 2 2 2 2-.9 2-2-.9-2-2-2zm0-6c-1.1 0-2 .9-2 2s.9 2 2 2 2-.9 2-2-.9-2-2-2zm6 4c1.1 0 2-.9 2-2s-.9-2-2-2-2 .9-2 2 .9 2 2 2zm0 2c-1.1 0-2 .9-2 2s.9 2 2 2 2-.9 2-2-.9-2-2-2zm0 6c-1.1 0-2 .9-2 2s.9 2 2 2 2-.9 2-2-.9-2-2-2z"/></svg>
<svg class="ic" style="left:56.1px;top:250.0px;width:19.8px;height:19.8px;color:#c4c6ca;" viewBox="0 0 24 24" fill="currentColor"><g fill="none" stroke="currentColor" stroke-width="1.600" stroke-linecap="round"><path d="M12 2.500V15"/><path d="M4 17V15.500C4 11.500 7.500 9.500 12 9.500S20 11.500 20 15.500V17"/></g><circle cx="3.800" cy="19" r="2.900"/><circle cx="12" cy="19" r="2.900"/><circle cx="20.200" cy="19" r="2.900"/></svg>
<span class="t" style="left:81.60px;top:251.50px;font-size:13.8px;letter-spacing:0.636px;color:#cdcfd3;-webkit-text-stroke:0.16px #cdcfd3;">Parallel</span>
<svg class="ic" style="left:210.8px;top:250.3px;width:22px;height:22px;color:#c4c6ca;" viewBox="0 0 24 24" fill="currentColor"><path d="M7 10l5 5 5-5z"/></svg>
<span class="t" style="left:57.30px;top:277.90px;font-size:13.8px;letter-spacing:0.292px;color:#cdcfd3;-webkit-text-stroke:0.16px #cdcfd3;">Sequence 1</span>
<svg class="ic" style="left:210.8px;top:276.7px;width:22px;height:22px;color:#c4c6ca;" viewBox="0 0 24 24" fill="currentColor"><path d="M7 10l5 5 5-5z"/></svg>
<svg class="ic" style="left:67.0px;top:303.7px;width:19.8px;height:19.8px;color:#6a6d72;" viewBox="0 0 24 24" fill="currentColor"><path d="M11 18c0 1.1-.9 2-2 2s-2-.9-2-2 .9-2 2-2 2 .9 2 2zm-2-8c-1.1 0-2 .9-2 2s.9 2 2 2 2-.9 2-2-.9-2-2-2zm0-6c-1.1 0-2 .9-2 2s.9 2 2 2 2-.9 2-2-.9-2-2-2zm6 4c1.1 0 2-.9 2-2s-.9-2-2-2-2 .9-2 2 .9 2 2 2zm0 2c-1.1 0-2 .9-2 2s.9 2 2 2 2-.9 2-2-.9-2-2-2zm0 6c-1.1 0-2 .9-2 2s.9 2 2 2 2-.9 2-2-.9-2-2-2z"/></svg>
<svg class="ic" style="left:92.7px;top:304.9px;width:18px;height:18px;color:#c4c6ca" viewBox="0 0 18 18" fill="none" stroke="currentColor" stroke-width="1.400"><circle cx="9" cy="9" r="4.300"/><path d="M9 1v3.700M9 13.300V17"/></svg>
<span class="t" style="left:116.50px;top:304.30px;font-size:13.8px;letter-spacing:0.644px;color:#dcdde0;-webkit-text-stroke:0.16px #dcdde0;">Image Gener...</span>
</div>
</body></html>
